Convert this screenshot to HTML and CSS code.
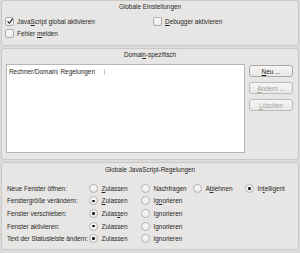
FILE: index.html
```html
<!DOCTYPE html>
<html lang="de">
<head>
    <meta charset="utf-8" />
    <title>JavaScript-Einstellungen</title>
    <link rel="stylesheet" href="styles.css">
</head>
<body>
    <div class="dialog">
        <div class="group">
            <div class="group-title">Globale Einstellungen</div>
            <div class="checks">
                <label class="check">
                    <span class="box"><svg viewBox="0 0 8 8" width="8" height="8"><path d="M1.6 4.3 L3.4 6.2 L6.6 1.6" fill="none" stroke="#1c1c1c" stroke-width="1.1"/></svg></span>
                    <span>Java<u>S</u>cript global aktivieren</span>
                </label>
                <label class="check">
                    <span class="box"></span>
                    <span><u>D</u>ebugger aktivieren</span>
                </label>
                <label class="check">
                    <span class="box"></span>
                    <span>Fehler <u>m</u>elden</span>
                </label>
            </div>
        </div>

        <div class="group">
            <div class="group-title">Domai<u>n</u>-spezifisch</div>
            <div class="domain-body">
                <div class="list">
                    <div class="list-header">
                        <span class="col col-host">Rechner/Domain</span>
                        <span class="col col-rule">Regelungen</span>
                    </div>
                </div>
                <div class="buttons">
                    <button class="button"><u>N</u>eu ...</button>
                    <button class="button" disabled><u>Ä</u>ndern ...</button>
                    <button class="button" disabled><u>L</u>öschen</button>
                </div>
            </div>
        </div>

        <div class="group">
            <div class="group-title">Globale JavaScript-Regelungen</div>
            <div class="rules">
                <span class="rule-label">Neue Fenster öffnen:</span>
                <span class="radio"><span class="dot"></span><span><u>Z</u>ulassen</span></span>
                <span class="radio"><span class="dot"></span><span>Nachfragen</span></span>
                <span class="radio"><span class="dot"></span><span>A<u>b</u>lehnen</span></span>
                <span class="radio"><span class="dot on"></span><span>In<u>t</u>elligent</span></span>

                <span class="rule-label">Fenstergröße verändern:</span>
                <span class="radio"><span class="dot on"></span><span><u>Z</u>ulassen</span></span>
                <span class="radio"><span class="dot"></span><span>Ig<u>n</u>orieren</span></span>
                <span></span><span></span>

                <span class="rule-label">Fenster verschieben:</span>
                <span class="radio"><span class="dot on"></span><span>Zulas<u>s</u>en</span></span>
                <span class="radio"><span class="dot"></span><span>Ignorieren</span></span>
                <span></span><span></span>

                <span class="rule-label">Fenster aktivieren:</span>
                <span class="radio"><span class="dot on"></span><span>Zulassen</span></span>
                <span class="radio"><span class="dot"></span><span>Ignorieren</span></span>
                <span></span><span></span>

                <span class="rule-label">Text der Statusleiste ändern:</span>
                <span class="radio"><span class="dot on"></span><span>Zulassen</span></span>
                <span class="radio"><span class="dot"></span><span>Ignorieren</span></span>
                <span></span><span></span>
            </div>
        </div>
    </div>
</body>
</html>
```

FILE: styles.css
```css
body {
    margin: 0;
    background: #dcdbd9;
    font-family: "Liberation Sans", Arial, sans-serif;
    font-size: 6.4px;
    color: #262626;
}
u {
    text-decoration-thickness: 0.6px;
    text-underline-offset: 1px;
}
.dialog {
    width: 300px;
    height: 253px;
    padding: 0 1px;
    box-sizing: border-box;
    display: flex;
    flex-direction: column;
    gap: 2px;
}
.group {
    background: #e7e6e4;
    border: 1px solid #cac9c7;
    border-radius: 3px;
}
.group-title {
    text-align: center;
    line-height: 11px;
}

/* Globale Einstellungen */
.checks {
    display: grid;
    grid-template-columns: 148px 1fr;
    grid-auto-rows: 12.5px;
    padding: 3px 3px 5px 3px;
}
.check {
    display: flex;
    align-items: center;
    gap: 3px;
}
.box {
    width: 7px;
    height: 7px;
    border: 1px solid #afaeac;
    border-radius: 2px;
    background: linear-gradient(#fbfbfb, #eceae8);
    display: flex;
    align-items: center;
    justify-content: center;
}
.box svg {
    flex: none;
}

/* Domain-spezifisch */
.domain-body {
    display: flex;
    gap: 4px;
    padding: 4px 5px 6px 4px;
}
.list {
    flex: 1;
    height: 87px;
    background: #fff;
    border: 1px solid #b7b6b4;
}
.list-header {
    display: flex;
    height: 13px;
    align-items: center;
}
.col {
    padding-left: 2px;
    border-right: 1px solid #c6c5c3;
    line-height: 6px;
    white-space: nowrap;
}
.col-host {
    width: 48px;
}
.col-rule {
    width: 43px;
    padding-left: 2.5px;
}
.buttons {
    width: 44px;
    display: flex;
    flex-direction: column;
    gap: 5px;
    padding-top: 1px;
}
.button {
    height: 12px;
    padding: 0;
    font: inherit;
    color: #1e1e1e;
    background: linear-gradient(#f6f5f4, #e9e8e6);
    border: 1px solid #a9a8a6;
    border-radius: 3px;
}
.button:disabled {
    color: #a2a1a0;
    border-color: #bcbbb9;
}

/* Globale JavaScript-Regelungen */
.group:last-child .group-title {
    line-height: 14px;
}
.rules {
    display: grid;
    grid-template-columns: 82px 52px 52px 52px 1fr;
    grid-auto-rows: 12.6px;
    align-items: center;
    padding: 5px 4px 4px 5px;
}
.radio {
    display: flex;
    align-items: center;
    gap: 3.5px;
}
.dot {
    width: 7px;
    height: 7px;
    border: 1px solid #b3b2b0;
    border-radius: 50%;
    background: linear-gradient(#fbfbfb, #ecebe9);
    display: flex;
    align-items: center;
    justify-content: center;
}
.dot.on::after {
    content: "";
    width: 2.5px;
    height: 2.5px;
    border-radius: 50%;
    background: #1a1a1a;
}
```
